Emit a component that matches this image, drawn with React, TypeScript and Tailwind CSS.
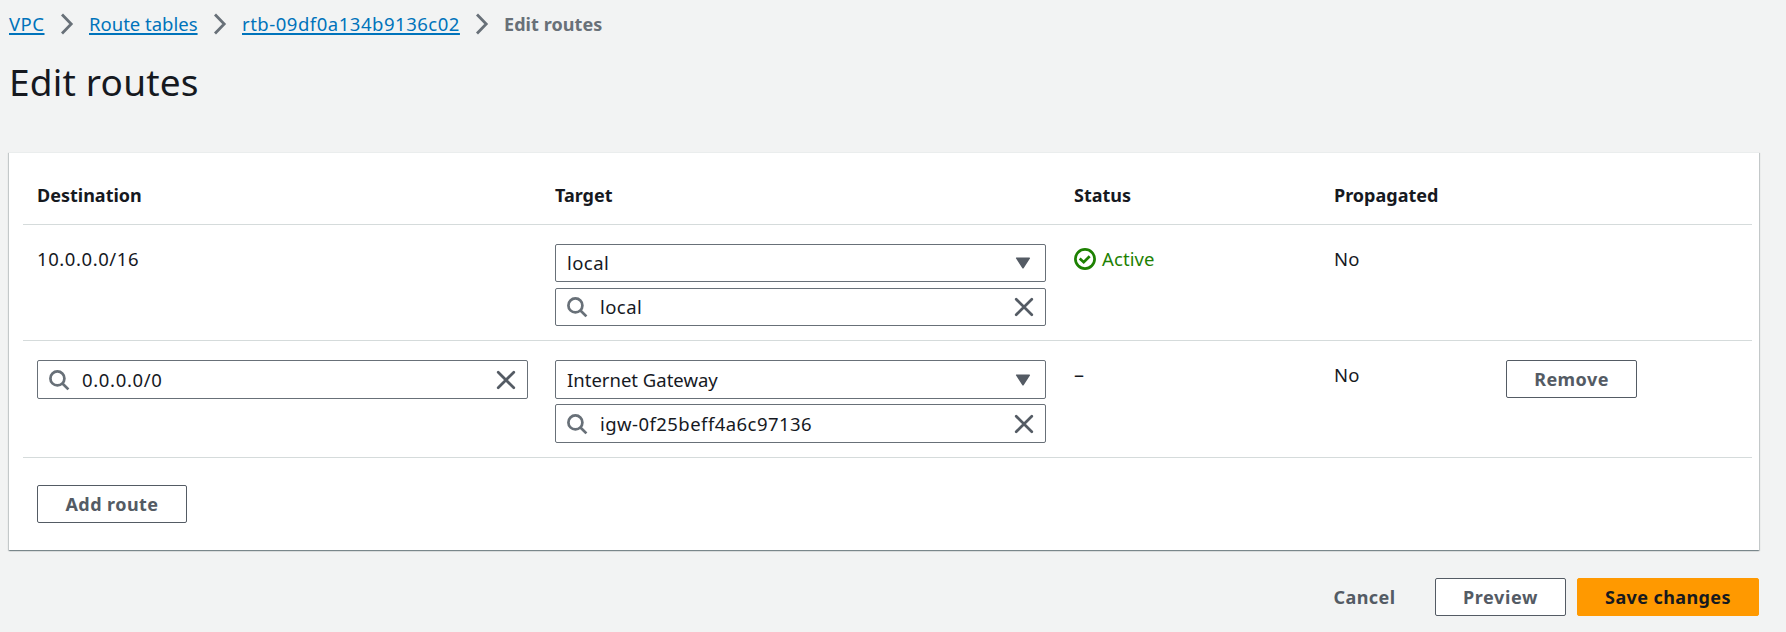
import React from "react";

const SearchIcon = () => (
  <svg className="h-[22px] w-[22px] shrink-0" viewBox="0 0 22 22" fill="none" stroke="#687078" strokeWidth="2.7">
    <circle cx="9.4" cy="9.4" r="7" />
    <path d="m20.4 20.4-6.2-6.2" />
  </svg>
);

const CloseIcon = () => (
  <svg className="h-[22px] w-[22px] shrink-0" viewBox="0 0 22 22" fill="none" stroke="#545b64" strokeWidth="2.7" strokeLinecap="round">
    <path d="m3.2 3.2 15.6 15.6M18.8 3.2 3.2 18.8" />
  </svg>
);

const CaretIcon = () => (
  <svg className="h-[22px] w-[22px] shrink-0" viewBox="0 0 22 22" fill="#545b64" stroke="#545b64" strokeWidth="1.5" strokeLinejoin="round">
    <path d="M4.7 6.2h12.6L11 15.8z" />
  </svg>
);

const CheckIcon = () => (
  <svg className="h-[22px] w-[22px] shrink-0" viewBox="0 0 22 22" fill="none" stroke="#1d8102" strokeWidth="2.7">
    <circle cx="11" cy="11" r="9.6" />
    <path d="m5.7 10.4 4 3.8 6-6" />
  </svg>
);

const Chevron = () => (
  <svg className="h-[22px] w-[14px]" viewBox="0 0 14 22" fill="none" stroke="#687078" strokeWidth="2.8">
    <path d="m1 1.5 9.2 9.5L1 20.5" />
  </svg>
);

function Select({ children, className = "h-[39px]" }: { children: React.ReactNode; className?: string }) {
  return (
    <div className={`flex items-center justify-between rounded-[2px] border border-[#687078] bg-white px-[11px] ${className}`}>
      <span>{children}</span>
      <CaretIcon />
    </div>
  );
}

function SearchInput({ children, className = "h-[39px]" }: { children: React.ReactNode; className?: string }) {
  return (
    <div className={`flex items-center rounded-[2px] border border-[#687078] bg-white px-[10px] ${className}`}>
      <SearchIcon />
      <span className="ml-3 flex-1">{children}</span>
      <CloseIcon />
    </div>
  );
}

function Button({ children, className = "" }: { children: React.ReactNode; className?: string }) {
  return (
    <button className={`flex h-[38px] items-center justify-center rounded-[2px] border text-lg/6 font-bold ${className}`}>
      {children}
    </button>
  );
}

const outline = "border-[#545b64] bg-white text-[#545b64]";
const row = "grid grid-cols-[518px_519px_260px_172px_1fr] border-b border-[#d5dbdb] pl-[14px]";

export default function App() {
  return (
    <div className="h-[632px] overflow-hidden bg-[#f2f3f3] pl-[9px] pr-[27px] pt-3 font-['Noto_Sans',sans-serif] text-[18.5px] leading-6 text-[#16191f]">
      <nav className="flex h-6 items-center text-[#0073bb]">
        <a className="w-[52px] tracking-[0.5px]"><span className="underline decoration-[1.5px] underline-offset-2">VPC</span></a>
        <Chevron />
        <a className="ml-[14px] w-[125px]"><span className="underline decoration-[1.5px] underline-offset-2">Route tables</span></a>
        <Chevron />
        <a className="ml-[14px] w-[234px] tracking-[0.52px]"><span className="underline decoration-[1.5px] underline-offset-2">rtb-09df0a134b9136c02</span></a>
        <Chevron />
        <span className="ml-[14px] text-lg/6 font-bold tracking-[0.08px] text-[#687078]">Edit routes</span>
      </nav>

      <h1 className="mt-[22px] text-[37px] leading-[48px] tracking-[0.2px]">Edit routes</h1>

      <main className="mt-[46px] h-[398px] border-t border-[#eaeded] bg-white pt-[18px] pr-[7px] pl-[14px] shadow-[0_1px_1px_0_rgba(0,28,36,0.3),1px_1px_1px_0_rgba(0,28,36,0.15),-1px_1px_1px_0_rgba(0,28,36,0.15)]">
        <div className={`${row} h-[54px] items-center pb-[5px] text-lg/6 font-bold`}>
          <span>Destination</span>
          <span>Target</span>
          <span>Status</span>
          <span>Propagated</span>
        </div>

        <div className={`${row} h-[116px]`}>
          <span className="pt-[22px] tracking-[0.57px]">10.0.0.0/16</span>
          <div className="flex w-[491px] flex-col gap-1.5 pt-[19px] tracking-[0.45px]">
            <Select className="h-[38px]">local</Select>
            <SearchInput className="h-[38px]">local</SearchInput>
          </div>
          <div className="mt-[22px] flex h-6 items-center gap-1.5 tracking-[0.1px] text-[#1d8102]">
            <CheckIcon />
            Active
          </div>
          <span className="pt-[22px] tracking-[0.3px]">No</span>
        </div>

        <div className={`${row} h-[117px]`}>
          <div className="w-[491px] pt-[19px] tracking-[0.65px]">
            <SearchInput>0.0.0.0/0</SearchInput>
          </div>
          <div className="flex w-[491px] flex-col gap-[5px] pt-[19px]">
            <Select>Internet Gateway</Select>
            <SearchInput className="h-[39px] tracking-[0.45px]">igw-0f25beff4a6c97136</SearchInput>
          </div>
          <span className="pt-[22px] text-xl/6">–</span>
          <span className="pt-[22px] tracking-[0.3px]">No</span>
          <div className="pt-[19px]">
            <Button className={`${outline} w-[131px] tracking-[0.45px]`}>Remove</Button>
          </div>
        </div>

        <Button className={`${outline} mt-[27px] ml-[14px] w-[150px] tracking-[0.45px]`}>Add route</Button>
      </main>

      <footer className="mt-7 flex justify-end">
        <Button className="mr-[5px] w-[131px] border-transparent text-[#545b64] tracking-[0.45px]">Cancel</Button>
        <Button className={`${outline} mr-[11px] w-[131px] tracking-[0.6px]`}>Preview</Button>
        <Button className="w-[182px] border-[#ff9900] bg-[#ff9900] tracking-[0.4px] text-[#16191f]">Save changes</Button>
      </footer>
    </div>
  );
}
